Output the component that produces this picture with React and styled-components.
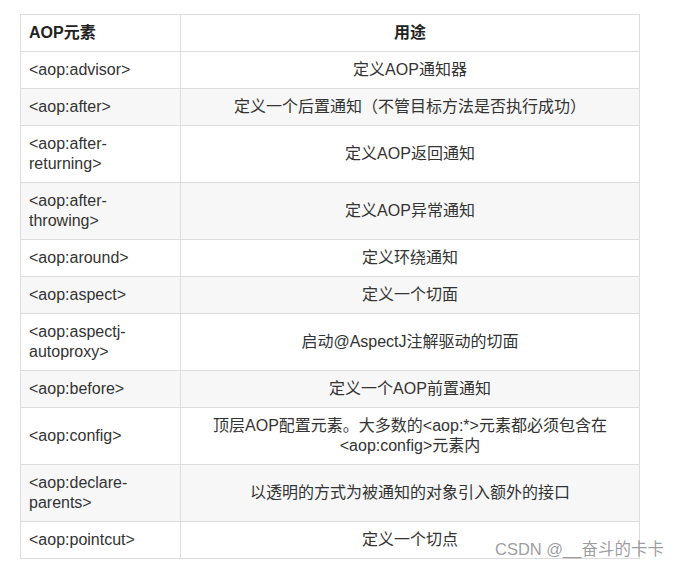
import React from "react";
import styled, { createGlobalStyle } from "styled-components";

const GlobalStyle = createGlobalStyle`
  html, body {
    margin: 0;
    padding: 0;
    background: #fff;
  }
  body {
    font-family: "Liberation Sans", "Noto Sans CJK SC", sans-serif;
  }
`;

const Page = styled.div`
  position: relative;
  width: 682px;
  height: 568px;
  padding: 14px 0 0 20px;
  box-sizing: border-box;
  overflow: hidden;
`;

const Table = styled.table`
  width: 620px;
  border-collapse: collapse;
  table-layout: fixed;
  font-size: 16px;
  line-height: 20px;
  color: #333;
`;

const Row = styled.tr`
  background: ${(p) => (p.$striped ? "#f7f7f7" : "#fff")};
`;

const Head = styled.th`
  border: 1px solid #ddd;
  padding: 8px;
  font-weight: bold;
  color: #222;
  text-align: ${(p) => p.$align || "left"};
`;

const Cell = styled.td`
  border: 1px solid #ddd;
  padding: 8px;
  text-align: ${(p) => p.$align || "left"};
  word-break: break-word;
`;

const Watermark = styled.div`
  position: absolute;
  left: 495px;
  top: 538px;
  font-size: 16.5px;
  line-height: 22px;
  color: rgba(140, 140, 140, 0.85);
  white-space: nowrap;
`;

const rows = [
  ["<aop:advisor>", "定义AOP通知器"],
  ["<aop:after>", "定义一个后置通知（不管目标方法是否执行成功）"],
  ["<aop:after-returning>", "定义AOP返回通知"],
  ["<aop:after-throwing>", "定义AOP异常通知"],
  ["<aop:around>", "定义环绕通知"],
  ["<aop:aspect>", "定义一个切面"],
  ["<aop:aspectj-autoproxy>", "启动@AspectJ注解驱动的切面"],
  ["<aop:before>", "定义一个AOP前置通知"],
  ["<aop:config>", "顶层AOP配置元素。大多数的<aop:*>元素都必须包含在<aop:config>元素内"],
  ["<aop:declare-parents>", "以透明的方式为被通知的对象引入额外的接口"],
  ["<aop:pointcut>", "定义一个切点"],
];

export default function App() {
  return (
    <Page>
      <GlobalStyle />
      <Table>
        <colgroup>
          <col style={{ width: 160 }} />
          <col />
        </colgroup>
        <thead>
          <Row>
            <Head>AOP元素</Head>
            <Head $align="center">用途</Head>
          </Row>
        </thead>
        <tbody>
          {rows.map(([name, use], i) => (
            <Row key={name} $striped={i % 2 === 1}>
              <Cell>{name}</Cell>
              <Cell $align="center">{use}</Cell>
            </Row>
          ))}
        </tbody>
      </Table>
      <Watermark>CSDN @__奋斗的卡卡</Watermark>
    </Page>
  );
}
